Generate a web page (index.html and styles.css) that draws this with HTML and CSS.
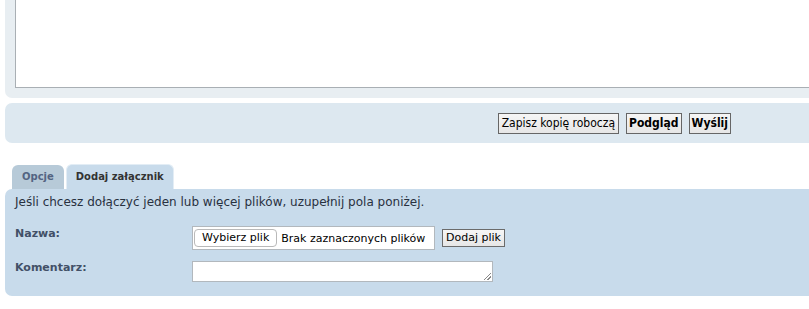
FILE: index.html
```html
<!DOCTYPE html>
<html lang="pl">
<head>
<meta charset="utf-8">
<title>Odpowiedz</title>
<link rel="stylesheet" href="styles.css">
</head>
<body>
<div class="editor-panel">
  <div class="message-box"></div>
</div>
<div class="submit-bar">
  <button class="btn">Zapisz kopię roboczą</button>
  <button class="btn btn-bold">Podgląd</button>
  <button class="btn btn-bold">Wyślij</button>
</div>
<div class="tabs">
  <a class="tab">Opcje</a>
  <a class="tab tab-active">Dodaj załącznik</a>
</div>
<div class="attach-panel">
  <p class="intro">Jeśli chcesz dołączyć jeden lub więcej plików, uzupełnij pola poniżej.</p>
  <div class="row row-file">
    <label class="row-label">Nazwa:</label>
    <div class="file-input">
      <span class="file-btn">Wybierz plik</span>
      <span class="file-status">Brak zaznaczonych plików</span>
    </div>
    <button class="btn btn-add">Dodaj plik</button>
  </div>
  <div class="row row-comment">
    <label class="row-label">Komentarz:</label>
    <div class="comment-box"><span class="grip"></span></div>
  </div>
</div>
</body>
</html>
```

FILE: styles.css
```css
html, body {
  margin: 0;
  padding: 0;
  background: #ffffff;
  overflow: hidden;
}
body {
  width: 809px;
  height: 309px;
  font-family: "DejaVu Sans", Verdana, sans-serif;
  color: #28313f;
}

.editor-panel {
  margin-left: 5px;
  height: 98px;
  background: #e8eef2;
  border-bottom-left-radius: 7px;
  padding-left: 10px;
  box-sizing: border-box;
}
.message-box {
  height: 88px;
  background: #ffffff;
  border-left: 1px solid #a9afb4;
  border-bottom: 1px solid #a9afb4;
  box-sizing: border-box;
}

.submit-bar {
  margin: 5px 0 0 5px;
  height: 40px;
  background: #dde8f0;
  border-radius: 7px 0 0 7px;
  display: flex;
  align-items: center;
  justify-content: flex-end;
  gap: 7px;
  padding-right: 78px;
  box-sizing: border-box;
}
.btn {
  font-family: "DejaVu Sans Condensed", "DejaVu Sans", sans-serif;
  font-size: 12px;
  color: #000;
  height: 21px;
  padding: 0 3px;
  border: 1px solid #666666;
  background: linear-gradient(#f6f6f6, #e6e6e6);
  border-radius: 0;
  line-height: 19px;
  white-space: nowrap;
}
.btn-bold {
  font-weight: bold;
  padding: 0 2px;
}

.tabs {
  margin-top: 21px;
  padding-left: 12px;
  display: flex;
  align-items: flex-end;
  gap: 2px;
  height: 25px;
}
.tab {
  font-size: 10px;
  font-weight: bold;
  color: #536482;
  background: #b7cad8;
  height: 24px;
  line-height: 24px;
  padding: 0 10px;
  border-radius: 6px 6px 0 0;
  box-sizing: border-box;
  white-space: nowrap;
}
.tab-active {
  color: #333333;
  background: #c8dbeb;
  height: 25px;
  padding: 0 9px;
  border: 1px solid #e3edf5;
  border-bottom: none;
  line-height: 23px;
}

.attach-panel {
  margin-left: 5px;
  background: #c8dbeb;
  border-radius: 7px 0 0 7px;
  padding: 5px 10px 0;
  height: 107px;
  box-sizing: border-box;
}
.intro {
  margin: 0;
  font-size: 12px;
  line-height: 16px;
}
.row {
  display: flex;
  align-items: center;
}
.row-file {
  margin-top: 16px;
  height: 24px;
}
.row-comment {
  margin-top: 11px;
  height: 21px;
}
.row-label {
  width: 177px;
  flex-shrink: 0;
  font-size: 11px;
  font-weight: bold;
  color: #425067;
  align-self: flex-start;
}
.row-file .row-label { margin-top: 1px; }
.row-comment .row-label { margin-top: 0; }

.file-input {
  width: 243px;
  flex-shrink: 0;
  height: 24px;
  background: #fff;
  border: 1px solid #b2b8bd;
  box-sizing: border-box;
  display: flex;
  align-items: center;
  padding-left: 1px;
  font-family: "DejaVu Sans", sans-serif;
  font-size: 11px;
  color: #000;
}
.file-btn {
  height: 18px;
  line-height: 16px;
  padding: 0 7px;
  border: 1px solid #b9b9b9;
  border-radius: 4px;
  background: #fff;
  box-sizing: border-box;
  white-space: nowrap;
  flex-shrink: 0;
}
.file-status {
  margin-left: 4px;
  white-space: nowrap;
}
.btn-add {
  margin-left: 7px;
  height: 18px;
  line-height: 16px;
  font-size: 11px;
  font-family: "DejaVu Sans", sans-serif;
  padding: 0 3px;
  border-color: #6b6b6b;
}
.comment-box {
  width: 301px;
  height: 21px;
  background: #fff;
  border: 1px solid #b2b8bd;
  box-sizing: border-box;
  position: relative;
}
.grip {
  position: absolute;
  right: 1px;
  bottom: 1px;
  width: 7px;
  height: 7px;
  background: linear-gradient(135deg, transparent 45%, #8a8a8a 45%, #8a8a8a 55%, transparent 55%, transparent 70%, #8a8a8a 70%, #8a8a8a 80%, transparent 80%);
}
```
